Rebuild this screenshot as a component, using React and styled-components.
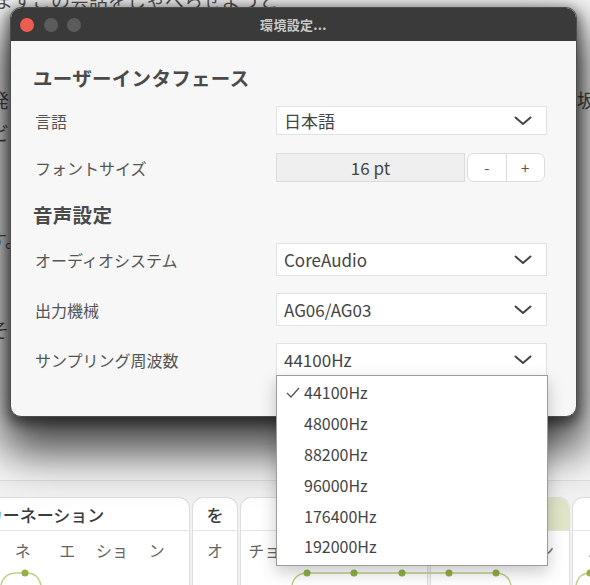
import React from "react";
import styled, { createGlobalStyle } from "styled-components";

const GlobalStyle = createGlobalStyle`
  html, body { margin: 0; padding: 0; }
  body {
    font-family: "Noto Sans CJK JP", "Noto Sans", sans-serif;
    background: #f7f7f7;
  }
  * { box-sizing: border-box; }
`;

const FONT = `"Noto Sans CJK JP", "Noto Sans", sans-serif`;

const Stage = styled.div`
  position: relative;
  width: 590px;
  height: 585px;
  overflow: hidden;
  background: #f9f9f9;
  font-family: ${FONT};
`;

const Backdrop = styled.div`
  display: flex;
  flex-direction: column;
  height: 100%;
`;

const Doc = styled.div`
  flex: 1;
  display: flex;
  flex-direction: column;
  color: #555;
  font-size: 19px;
  line-height: 26px;
`;

const DocLine = styled.div`
  display: flex;
  justify-content: space-between;
  margin-top: ${(p) => p.$gap}px;
  margin-left: ${(p) => p.$indent}px;
  margin-right: -6px;
  white-space: nowrap;
`;

const Timeline = styled.div`
  position: relative;
  height: 105px;
  border-top: 1px solid #e2e2e2;
  background: #f2f2f2;
  padding-top: 16px;
  display: flex;
  flex-direction: column;
`;

const CardRow = styled.div`
  flex: 1;
  display: flex;
  gap: 2px;
  margin-left: ${(p) => p.$offset}px;
`;

const Card = styled.div`
  flex: none;
  width: ${(p) => p.$w}px;
  background: #fff;
  border: 1px solid #dedede;
  border-bottom: none;
  border-radius: 11px 11px 0 0;
  display: flex;
  flex-direction: column;
  overflow: hidden;
`;

const CardHead = styled.div`
  height: 33px;
  display: flex;
  align-items: center;
  justify-content: center;
  font-size: 17px;
  font-weight: 500;
  color: #3c3c3c;
  white-space: nowrap;
  background: ${(p) => (p.$active ? "#dfe5c7" : "transparent")};
  border-bottom: 1px solid #e6e6e6;
`;

const KanaRow = styled.div`
  display: flex;
  padding: 0 ${(p) => p.$pad || 0}px;
  height: 38px;
  align-items: center;
`;

const Kana = styled.div`
  flex: 1;
  text-align: center;
  font-size: 16px;
  color: #666;
  white-space: nowrap;
`;

const CurveLayer = styled.svg`
  position: absolute;
  left: 0;
  bottom: 0;
  pointer-events: none;
`;

const Dialog = styled.div`
  position: absolute;
  top: 7px;
  left: 10px;
  width: 567px;
  height: 410px;
  border: 1px solid #4d4d4d;
  border-radius: 11px;
  background: #f7f7f7;
  box-shadow: 0 26px 46px 10px rgba(0, 0, 0, 0.72), 0 4px 12px 3px rgba(0, 0, 0, 0.45);
  display: flex;
  flex-direction: column;
`;

const TitleBar = styled.div`
  height: 33px;
  background: #3a3a3a;
  border-radius: 10px 10px 0 0;
  display: grid;
  grid-template-columns: 1fr auto 1fr;
  align-items: center;
  padding-left: 9px;
`;

const Lights = styled.div`
  display: flex;
  gap: 9.6px;
`;

const Light = styled.span`
  width: 14px;
  height: 14px;
  border-radius: 50%;
  background: ${(p) => p.$color};
`;

const Title = styled.div`
  color: #c9c9c9;
  font-size: 13px;
  font-weight: 700;
  letter-spacing: 0.3px;
  margin-left: -9px;
`;

const Body = styled.div`
  padding: 23px 29px 0 22px;
  display: flex;
  flex-direction: column;
`;

const Heading = styled.h2`
  margin: ${(p) => p.$top || 0}px 0 0;
  font-size: 19.5px;
  line-height: 28px;
  font-weight: 700;
  letter-spacing: 0.3px;
  color: #4a4a4a;
`;

const Row = styled.div`
  display: grid;
  grid-template-columns: 1fr 271px;
  align-items: center;
  margin-top: ${(p) => p.$top}px;
  height: ${(p) => p.$h}px;
`;

const Label = styled.div`
  padding-left: 2px;
  font-size: 16px;
  color: #555;
`;

const SelectBox = styled.div`
  position: relative;
  height: 100%;
  display: flex;
  align-items: center;
  justify-content: space-between;
  background: #fff;
  border: 1px solid #e2e2e2;
  padding: 0 14px 0 7px;
  font-size: 17px;
  color: #444;
`;

const Stepper = styled.div`
  display: flex;
  gap: 2px;
  height: 100%;
`;

const StepValue = styled.div`
  width: 189px;
  display: flex;
  align-items: center;
  justify-content: center;
  background: #efefef;
  border: 1px solid #dcdcdc;
  font-size: 17px;
  color: #444;
`;

const StepButtons = styled.div`
  width: 78px;
  display: flex;
  background: #fff;
  border: 1px solid #dcdcdc;
  border-radius: 7px;
  overflow: hidden;
`;

const StepButton = styled.button`
  flex: 1;
  border: none;
  background: transparent;
  font-family: ${FONT};
  font-size: 15px;
  color: #555;
  padding: 0;
  & + & { border-left: 1px solid #dcdcdc; }
`;

const Menu = styled.div`
  position: absolute;
  top: 100%;
  left: -1px;
  width: 272px;
  background: #fff;
  border: 1px solid #9c9c9c;
  box-shadow: 0 6px 16px rgba(0, 0, 0, 0.22);
  padding: 1px 0 3px;
  z-index: 2;
`;

const MenuItem = styled.div`
  position: relative;
  height: 30.8px;
  display: flex;
  align-items: center;
  padding-left: 27px;
  font-size: 16px;
  color: #444;
`;

const Check = styled.svg`
  position: absolute;
  left: 9px;
  top: 10px;
`;

const Chevron = () => (
  <svg width="18" height="10" viewBox="0 0 18 10">
    <polyline points="1.5,1.5 9,8 16.5,1.5" fill="none" stroke="#444" strokeWidth="2" strokeLinecap="round" strokeLinejoin="round" />
  </svg>
);

const rates = ["44100Hz", "48000Hz", "88200Hz", "96000Hz", "176400Hz", "192000Hz"];

const cards = [
  { id: "c1", w: 290, head: "カーネーション", kana: ["カ", "ア", "ネ", "エ", "ショ", "ン"], pad: 10 },
  { id: "c2", w: 46, head: "を", kana: ["オ"] },
  { id: "c3", w: 188, head: "", kana: ["チョ", "", "", ""] },
  { id: "c4", w: 140, head: "", kana: ["", "", "ン"], active: true },
  { id: "c5", w: 140, head: "", kana: ["ハ", "", ""] },
];

function Curves() {
  const dots = [25, 307, 354, 402, 449, 496, 590];
  return (
    <CurveLayer width="590" height="22" viewBox="0 0 590 22">
      <g fill="none" stroke="#bfd08a" strokeWidth="1.5">
        <path d="M 1 22 C 3 13, 9 10, 17 10 L 27 10 C 35 10, 39 14, 41 22" />
        <path d="M 292 22 C 294 13, 300 10, 308 10 L 496 10 C 504 10, 509 14, 511 22" />
        <path d="M 576 22 C 578 13, 583 10, 590 10 L 600 10" />
      </g>
      <g fill="#95ae46">
        {dots.map((x) => (
          <circle key={x} cx={x} cy="10" r="3.5" />
        ))}
      </g>
    </CurveLayer>
  );
}

export default function App() {
  return (
    <>
      <GlobalStyle />
      <Stage>
        <Backdrop>
          <Doc>
            <DocLine $gap={-13} $indent={-6}>
              <span>ますこの会話をしゃべらせようと</span>
            </DocLine>
            <DocLine $gap={74} $indent={-10}>
              <span>発</span>
              <span>坂</span>
            </DocLine>
            <DocLine $gap={7} $indent={-10}>
              <span>ビ</span>
            </DocLine>
            <DocLine $gap={81} $indent={-12}>
              <span>す。</span>
            </DocLine>
            <DocLine $gap={64} $indent={-10}>
              <span>そ：</span>
            </DocLine>
          </Doc>
          <Timeline>
            <CardRow $offset={-100}>
              {cards.map((c) => (
                <Card key={c.id} $w={c.w}>
                  <CardHead $active={c.active}>{c.head}</CardHead>
                  <KanaRow $pad={c.pad}>
                    {c.kana.map((k, i) => (
                      <Kana key={i}>{k}</Kana>
                    ))}
                  </KanaRow>
                </Card>
              ))}
            </CardRow>
            <Curves />
          </Timeline>
        </Backdrop>

        <Dialog>
          <TitleBar>
            <Lights>
              <Light $color="#ee5c50" />
              <Light $color="#5b5b5b" />
              <Light $color="#5b5b5b" />
            </Lights>
            <Title>環境設定...</Title>
            <span />
          </TitleBar>
          <Body>
            <Heading>ユーザーインタフェース</Heading>
            <Row $top={14} $h={29}>
              <Label>言語</Label>
              <SelectBox>
                <span>日本語</span>
                <Chevron />
              </SelectBox>
            </Row>
            <Row $top={18} $h={29}>
              <Label>フォントサイズ</Label>
              <Stepper>
                <StepValue>16 pt</StepValue>
                <StepButtons>
                  <StepButton>-</StepButton>
                  <StepButton>+</StepButton>
                </StepButtons>
              </Stepper>
            </Row>
            <Heading $top={19}>音声設定</Heading>
            <Row $top={14} $h={33}>
              <Label>オーディオシステム</Label>
              <SelectBox>
                <span>CoreAudio</span>
                <Chevron />
              </SelectBox>
            </Row>
            <Row $top={17} $h={33}>
              <Label>出力機械</Label>
              <SelectBox>
                <span>AG06/AG03</span>
                <Chevron />
              </SelectBox>
            </Row>
            <Row $top={17} $h={33}>
              <Label>サンプリング周波数</Label>
              <SelectBox>
                <span>44100Hz</span>
                <Chevron />
                <Menu>
                  {rates.map((r, i) => (
                    <MenuItem key={r}>
                      {i === 0 && (
                        <Check width="14" height="11" viewBox="0 0 14 11">
                          <polyline points="1,6 5,10 13,1" fill="none" stroke="#555" strokeWidth="1.3" />
                        </Check>
                      )}
                      {r}
                    </MenuItem>
                  ))}
                </Menu>
              </SelectBox>
            </Row>
          </Body>
        </Dialog>
      </Stage>
    </>
  );
}
